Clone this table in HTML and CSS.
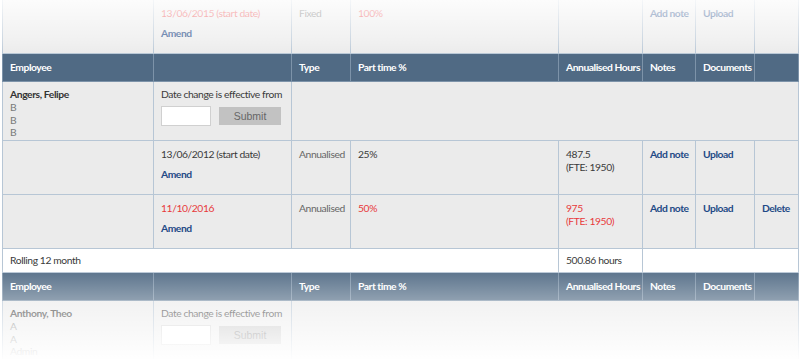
FILE: index.html
```html
<!DOCTYPE html>
<html>
<head>
<meta charset="utf-8">
<link rel="stylesheet" href="styles.css">
</head>
<body>
<div class="viewport">
<table class="grid">
  <colgroup>
    <col class="c1"><col class="c2"><col class="c3"><col class="c4"><col class="c5"><col class="c6"><col class="c7"><col class="c8">
  </colgroup>
  <tbody>
    <tr class="entry">
      <td></td>
      <td><div class="red">13/06/2015 (start date)</div><a class="link amend">Amend</a></td>
      <td class="muted">Fixed</td>
      <td class="red">100%</td>
      <td></td>
      <td><a class="link">Add note</a></td>
      <td><a class="link">Upload</a></td>
      <td></td>
    </tr>
    <tr class="head">
      <th>Employee</th><th></th><th>Type</th><th>Part time %</th><th>Annualised Hours</th><th>Notes</th><th>Documents</th><th></th>
    </tr>
    <tr class="emp">
      <td>
        <div class="name">Angers, Felipe</div>
        <div class="sub">B</div><div class="sub">B</div><div class="sub">B</div>
      </td>
      <td>
        <div>Date change is effective from</div>
        <div class="form"><span class="input"></span><span class="btn">Submit</span></div>
      </td>
      <td colspan="6"></td>
    </tr>
    <tr class="entry">
      <td></td>
      <td><div>13/06/2012 (start date)</div><a class="link amend">Amend</a></td>
      <td class="muted">Annualised</td>
      <td>25%</td>
      <td><div>487.5</div><div>(FTE: 1950)</div></td>
      <td><a class="link">Add note</a></td>
      <td><a class="link">Upload</a></td>
      <td></td>
    </tr>
    <tr class="entry">
      <td></td>
      <td><div class="red">11/10/2016</div><a class="link amend">Amend</a></td>
      <td class="muted">Annualised</td>
      <td class="red">50%</td>
      <td class="red"><div>975</div><div>(FTE: 1950)</div></td>
      <td><a class="link">Add note</a></td>
      <td><a class="link">Upload</a></td>
      <td><a class="link">Delete</a></td>
    </tr>
    <tr class="total">
      <td colspan="4">Rolling 12 month</td>
      <td>500.86 hours</td>
      <td colspan="3"></td>
    </tr>
    <tr class="head">
      <th>Employee</th><th></th><th>Type</th><th>Part time %</th><th>Annualised Hours</th><th>Notes</th><th>Documents</th><th></th>
    </tr>
    <tr class="emp">
      <td>
        <div class="name">Anthony, Theo</div>
        <div class="sub">A</div><div class="sub">A</div><div class="sub">Admin</div>
      </td>
      <td>
        <div>Date change is effective from</div>
        <div class="form"><span class="input"></span><span class="btn">Submit</span></div>
      </td>
      <td colspan="6"></td>
    </tr>
  </tbody>
</table>
<div class="fade-top"></div>
<div class="fade-bottom"></div>
</div>
</body>
</html>
```

FILE: styles.css
```css
html, body {
  margin: 0;
  padding: 0;
  background: #fff;
}
.viewport {
  position: relative;
  width: 800px;
  height: 359px;
  overflow: hidden;
  font-family: "Lato", "Liberation Sans", sans-serif;
  font-size: 10.3px;
  letter-spacing: -0.4px;
  color: #3a3a3a;
}
.grid {
  margin: -1px 0 0 2px;
  width: 796px;
  border-collapse: collapse;
  table-layout: fixed;
}
.c1 { width: 151px; }
.c2 { width: 138px; }
.c3 { width: 59px; }
.c4 { width: 208px; }
.c5 { width: 84px; }
.c6 { width: 53px; }
.c7 { width: 59px; }
.c8 { width: 44px; }
td, th {
  border: 1px solid #b7c6d5;
  padding: 0 7px;
  text-align: left;
  vertical-align: top;
  line-height: 13px;
  white-space: nowrap;
  overflow: hidden;
}
.head th {
  background: #506a84;
  color: #fff;
  font-weight: 700;
  height: 27px;
  vertical-align: middle;
  border-color: #7d93a9;
  letter-spacing: -0.45px;
}
.entry td {
  background: #ebebeb;
  height: 54px;
  padding-top: 7px;
  box-sizing: border-box;
}
.emp td {
  background: #ebebeb;
  height: 59px;
  padding-top: 6px;
  box-sizing: border-box;
}
.total td {
  background: #fff;
  height: 24px;
  vertical-align: middle;
  box-sizing: border-box;
}
.muted { color: #666; }
.red { color: #e8393b; }
.link {
  color: #1f4a86;
  font-weight: 700;
  letter-spacing: -0.45px;
}
.amend {
  display: block;
  margin-top: 7px;
}
.name {
  font-weight: 700;
  color: #333;
}
.sub {
  color: #7a7a7a;
  line-height: 12.5px;
}
.form {
  display: flex;
  align-items: center;
  gap: 8px;
  margin-top: 5px;
}
.input {
  width: 48px;
  height: 18px;
  background: #fff;
  border: 1px solid #d0d0d0;
}
.btn {
  width: 62px;
  height: 18px;
  background: #c2c2c2;
  color: #666;
  font-family: "Liberation Sans", sans-serif;
  font-size: 10.5px;
  letter-spacing: 0;
  display: flex;
  align-items: center;
  justify-content: center;
}
.fade-top {
  position: absolute;
  left: 0; right: 0; top: 0;
  height: 55px;
  background: linear-gradient(rgba(255,255,255,0.85), rgba(255,255,255,0.3) 40px, rgba(255,255,255,0));
  pointer-events: none;
}
.fade-bottom {
  position: absolute;
  left: 0; right: 0; bottom: 0;
  height: 94px;
  background: linear-gradient(rgba(255,255,255,0), rgba(255,255,255,0.97));
  pointer-events: none;
}
```
